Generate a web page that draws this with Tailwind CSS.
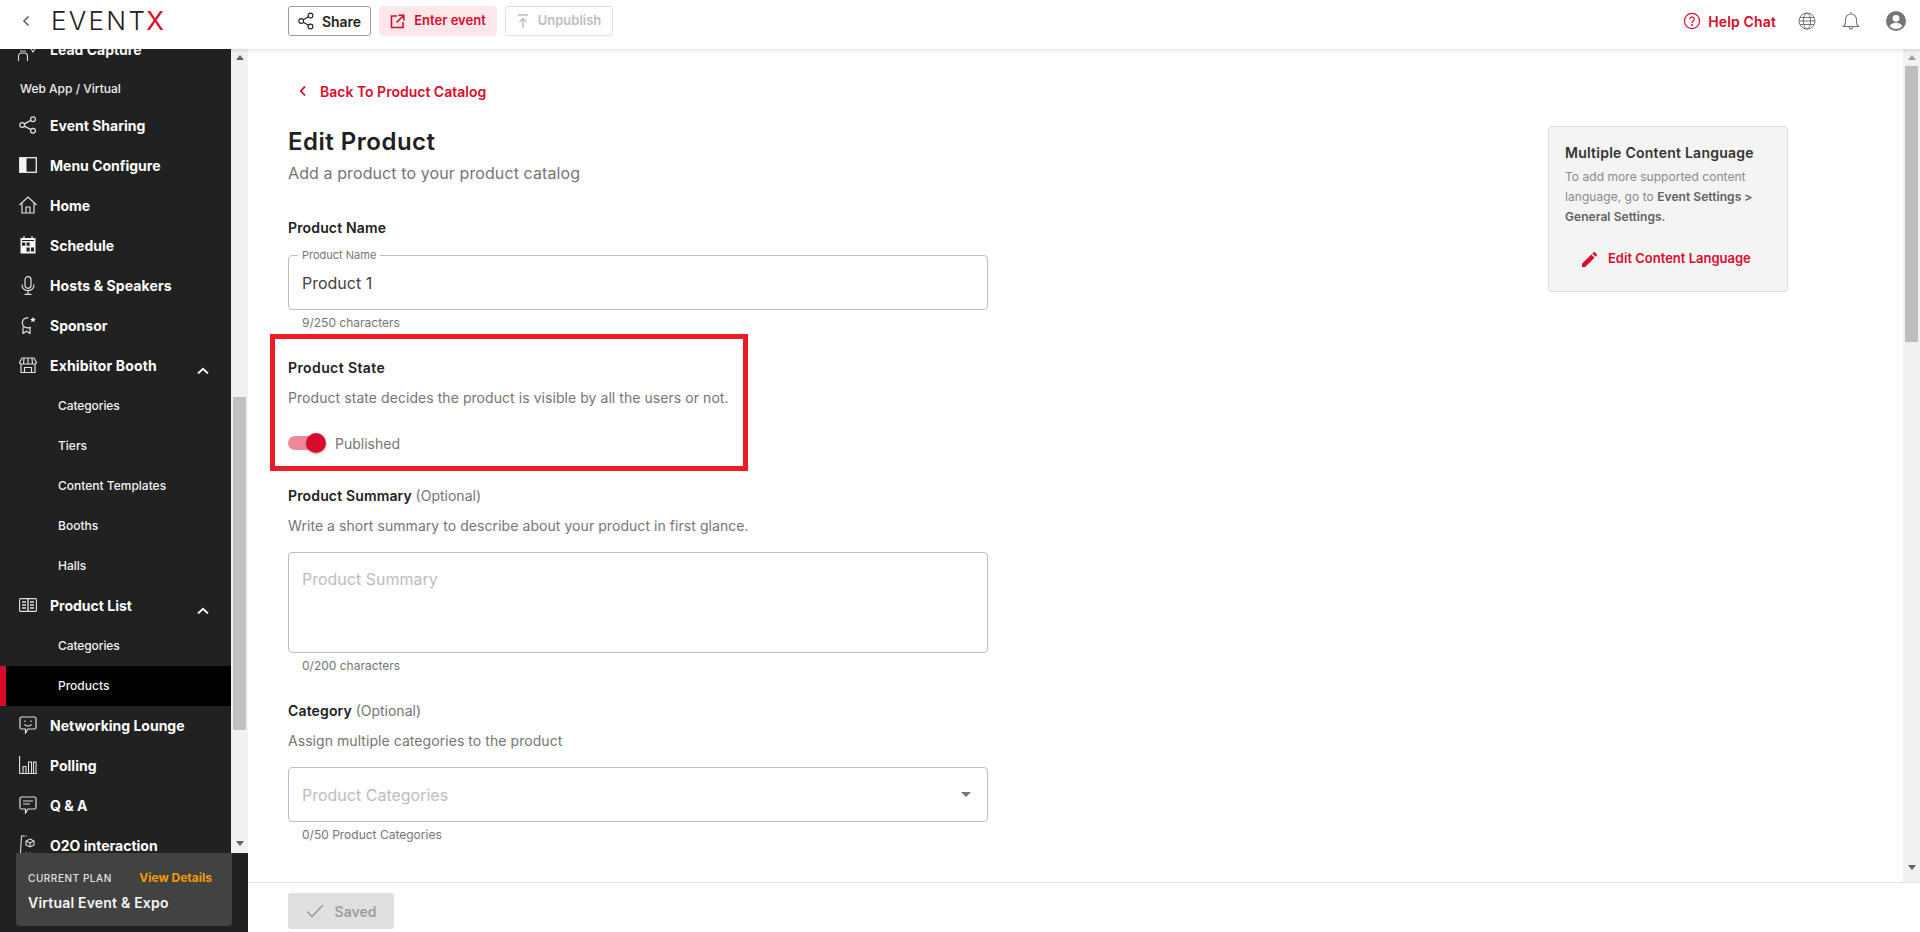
<!DOCTYPE html>
<html lang="en"><head><meta charset="utf-8"><title>Edit Product</title>
<script src="https://cdn.jsdelivr.net/npm/@tailwindcss/browser@4"></script></head>
<body class="bg-white font-['Inter',sans-serif] overflow-hidden">
<div class="w-[1920px] h-[932px] flex flex-col overflow-hidden">
<!-- top bar -->
<header class="relative z-10 h-[49px] shrink-0 bg-white shadow-[0_1px_4px_rgba(0,0,0,0.15)] flex items-center pb-[7px]">
  <svg class="ml-[21px] w-[10px] h-[14px]" viewBox="0 0 10 14" fill="none" stroke="#616161" stroke-width="1.6"><path d="M7.5 2.5 3 7l4.500 4.500"/></svg>
  <div class="ml-[20px] w-[113px] flex items-center text-[26px] leading-none font-light tracking-[2.3px] text-[#212121] whitespace-nowrap">EVENT<span class="text-[#d80b2a] font-normal -ml-[1px]">X</span></div>
  <div class="ml-[124px] flex items-center gap-2">
    <button class="w-[83px] h-[30px] rounded-[3px] border border-[#9e9e9e] flex items-center justify-center gap-[8px] text-[14px] font-semibold text-[#212121]">
      <svg class="w-[16px] h-[18px]" viewBox="0 0 16 18" fill="none" stroke="#212121" stroke-width="1.1"><circle cx="3.2" cy="9" r="2.4"/><circle cx="12.5" cy="3.5" r="2.4"/><circle cx="12.500" cy="14.500" r="2.4"/><path d="m5.3 7.8 5.1-3M5.3 10.200l5.100 3"/></svg>Share</button>
    <button class="w-[118px] h-[30px] rounded-[3px] bg-[#fde7ea] flex items-center justify-center gap-[9px] text-[13px] font-semibold text-[#d80b2a]">
      <svg class="w-[15px] h-[15px]" viewBox="0 0 15 15" fill="none" stroke="#d80b2a" stroke-width="1.6"><path d="M7 2H1.500v11.500H13V8M8.500 1.200h5.300v5.300M13.500 1.500 6.500 8.500"/></svg>Enter event</button>
    <button class="w-[108px] h-[30px] rounded-[3px] border border-[#e0e0e0] flex items-center justify-center gap-[9px] text-[13px] font-semibold text-[#bdbdbd]">
      <svg class="w-[12px] h-[15px]" viewBox="0 0 12 15" fill="none" stroke="#bdbdbd" stroke-width="1.4"><path d="M1 1h10M6 14V5M2.500 8 6 4.500 9.500 8"/></svg>Unpublish</button>
  </div>
  <div class="ml-auto flex items-center">
    <svg class="w-[18px] h-[18px]" viewBox="0 0 18 18" fill="none" stroke="#d80b2a" stroke-width="1.2"><circle cx="9" cy="9" r="7.6"/><path d="M6.800 7.200a2.200 2.200 0 1 1 3.400 1.800c-.8.500-1.200 1-1.200 1.900"/><circle cx="9" cy="13" r=".4"/></svg>
    <span class="ml-[7px] text-[14px] font-semibold tracking-[0.15px] text-[#d80b2a] whitespace-nowrap">Help Chat</span>
    <svg class="ml-[22px] w-[18px] h-[18px]" viewBox="0 0 18 18" fill="none" stroke="#757575" stroke-width="1"><circle cx="9" cy="9" r="8"/><ellipse cx="9" cy="9" rx="3.600" ry="8"/><path d="M1 9h16M2 5.500h14M2 12.500h14"/></svg>
    <svg class="ml-[26px] w-[18px] h-[20px]" viewBox="0 0 18 20" fill="none" stroke="#757575" stroke-width="1.1"><path d="M1.500 15.500c1.300-1.200 2-2.300 2-4.500V8.500a5.500 5.500 0 0 1 11 0V11c0 2.200.7 3.300 2 4.500zM7.300 15.500a1.800 1.800 0 1 0 3.400 0M9 1v2"/></svg>
    <svg class="ml-[26px] mr-[14px] w-[20px] h-[20px]" viewBox="0 0 20 20"><circle cx="10" cy="10" r="10" fill="#757575"/><circle cx="10" cy="7.300" r="3.400" fill="#fff"/><path d="M3.700 15c1.400-2.300 3.800-3.300 6.300-3.300s4.900 1 6.300 3.300c-1.500 1.800-3.800 3-6.300 3s-4.800-1.200-6.300-3z" fill="#fff"/></svg>
  </div>
</header>
<div class="flex-1 min-h-0 flex">
  <!-- sidebar -->
  <aside class="w-[248px] shrink-0 bg-[#212121] flex flex-col">
    <div class="h-[804px] flex overflow-hidden">
      <nav class="w-[231px] -mt-[19px] text-white">
        <a class="h-10 flex items-center pb-[2px] text-[14px] font-bold"><span class="w-[50px] flex justify-center pl-[6px]"><svg class="w-[20px] h-[22px] translate-y-[2px]" viewBox="0 0 20 22" fill="none" stroke="#e0e0e0" stroke-width="1.100"><circle cx="5" cy="6" r="2.500"/><path d="M.5 21v-5a3 3 0 0 1 3-3h3a3 3 0 0 1 3 3v5M2 11h6M12.500 8l2.500 4 4-6"/></svg></span>Lead Capture</a>
        <div class="h-9 flex items-center pt-[2px] pl-[20px] text-[12px] font-medium text-[#eeeeee]">Web App / Virtual</div>
        <a class="h-10 flex items-center pb-[2px] text-[14px] font-bold"><span class="w-[50px] flex justify-center pl-[6px]"><svg class="w-[18px] h-[18px]" viewBox="0 0 18 18" fill="none" stroke="#e0e0e0" stroke-width="1.200"><circle cx="3.200" cy="9" r="2.400"/><circle cx="14" cy="3.300" r="2.400"/><circle cx="14" cy="14.700" r="2.400"/><path d="m5.300 7.900 6.600-3.500M5.300 10.100l6.600 3.500"/></svg></span>Event Sharing</a>
        <a class="h-10 flex items-center pb-[2px] text-[14px] font-bold"><span class="w-[50px] flex justify-center pl-[6px]"><svg class="w-[18px] h-[18px]" viewBox="0 0 18 18"><rect x=".7" y="1.700" width="16.600" height="14.600" fill="none" stroke="#e0e0e0" stroke-width="1.400"/><rect x="1" y="2" width="6.500" height="14" fill="#f5f5f5"/></svg></span>Menu Configure</a>
        <a class="h-10 flex items-center pb-[2px] text-[14px] font-bold"><span class="w-[50px] flex justify-center pl-[6px]"><svg class="w-[18px] h-[18px]" viewBox="0 0 18 18" fill="none" stroke="#e0e0e0" stroke-width="1.200"><path d="M.5 9 9 1l8.500 8M3 7.500V17h12V7.500M7 17v-6h4v6"/></svg></span>Home</a>
        <a class="h-10 flex items-center pb-[2px] text-[14px] font-bold"><span class="w-[50px] flex justify-center pl-[6px]"><svg class="w-[16px] h-[18px]" viewBox="0 0 16 18"><path d="M4 0v3M12 0v3" stroke="#e0e0e0" stroke-width="1.300"/><rect x=".5" y="2" width="15" height="15.500" fill="#f5f5f5"/><g fill="#212121"><rect x="2" y="4" width="12" height="1"/><rect x="2" y="6.500" width="3.200" height="3.200"/><rect x="6.500" y="6.500" width="3.200" height="3.200"/><rect x="6.500" y="11.500" width="3.200" height="4"/><rect x="11" y="11.500" width="3" height="4"/></g></svg></span>Schedule</a>
        <a class="h-10 flex items-center pb-[2px] text-[14px] font-bold tracking-[0.1px]"><span class="w-[50px] flex justify-center pl-[6px]"><svg class="w-[14px] h-[19px]" viewBox="0 0 14 19" fill="none" stroke="#e0e0e0" stroke-width="1.200"><rect x="4" y=".7" width="6" height="11.600" rx="3"/><path d="M1 8.500c0 4 2.700 6 6 6s6-2 6-6M7 14.500v3.500M3.500 18.300h7"/></svg></span>Hosts &amp; Speakers</a>
        <a class="h-10 flex items-center pb-[2px] text-[14px] font-bold"><span class="w-[50px] flex justify-center pl-[6px]"><svg class="w-[18px] h-[18px]" viewBox="0 0 18 18" fill="none" stroke="#e0e0e0" stroke-width="1.200"><path d="M9.500 2a5 5 0 1 0-.5 9.800c1 0 2-.3 2.800-.9M4 11v6.500l3.500-2.200 3.500 2.200V11"/><path d="m14 .8.800 1.900 2 .2-1.500 1.300.5 2-1.800-1.100-1.800 1.100.5-2-1.500-1.300 2-.2z" fill="#f5f5f5" stroke="none"/></svg></span>Sponsor</a>
        <a class="h-10 flex items-center pb-[2px] text-[14px] font-bold tracking-[0.15px] relative"><span class="w-[50px] flex justify-center pl-[6px]"><svg class="w-[18px] h-[16px]" viewBox="0 0 18 16" fill="none" stroke="#e0e0e0" stroke-width="1.200"><path d="M3 1h12l2.400 4.500c0 1-.8 1.500-1.600 1.500H2.200C1.400 7 .6 6.500.6 5.500zM2 7v8.500h14V7M5.500 15.500V10.500h7v5M5 1.500 4.500 7M9 1v6M13 1.500l.5 5.500"/></svg></span>Exhibitor Booth<svg class="absolute left-[197px] top-[21px] w-[12px] h-[8px]" viewBox="0 0 12 8" fill="none" stroke="#f5f5f5" stroke-width="1.800"><path d="M1 6.500 6 1.800l5 4.700"/></svg></a>
        <a class="h-10 flex items-center pl-[58px] text-[12px] font-medium text-[#f5f5f5] tracking-[-0.1px]">Categories</a>
        <a class="h-10 flex items-center pl-[58px] text-[12px] font-medium text-[#f5f5f5]">Tiers</a>
        <a class="h-10 flex items-center pl-[58px] text-[12px] font-medium text-[#f5f5f5]">Content Templates</a>
        <a class="h-10 flex items-center pl-[58px] text-[12px] font-medium text-[#f5f5f5]">Booths</a>
        <a class="h-10 flex items-center pl-[58px] text-[12px] font-medium text-[#f5f5f5]">Halls</a>
        <a class="h-10 flex items-center pb-[2px] text-[14px] font-bold relative"><span class="w-[50px] flex justify-center pl-[6px]"><svg class="w-[18px] h-[14px]" viewBox="0 0 18 14" fill="none" stroke="#e0e0e0" stroke-width="1.100"><rect x=".6" y=".6" width="16.800" height="12.800" rx="1"/><path d="M9 1v12M3 4h4M3 7h4M3 10h4M11 4h4M11 7h4M11 10h4" stroke-width="1.400"/></svg></span>Product List<svg class="absolute left-[197px] top-[21px] w-[12px] h-[8px]" viewBox="0 0 12 8" fill="none" stroke="#f5f5f5" stroke-width="1.800"><path d="M1 6.500 6 1.800l5 4.700"/></svg></a>
        <a class="h-10 flex items-center pl-[58px] text-[12px] font-medium text-[#f5f5f5] tracking-[-0.1px]">Categories</a>
        <a class="h-10 flex items-center pl-[52px] text-[12px] font-medium text-[#f5f5f5] bg-black border-l-[6px] border-[#d80b2a]">Products</a>
        <a class="h-10 flex items-center pb-[2px] text-[14px] font-bold"><span class="w-[50px] flex justify-center pl-[6px]"><svg class="w-[18px] h-[18px]" viewBox="0 0 18 18" fill="none" stroke="#e0e0e0" stroke-width="1.200"><path d="M2.500 1h13A1.500 1.500 0 0 1 17 2.500v9a1.500 1.500 0 0 1-1.500 1.500H9l-2.500 4V13h-4A1.500 1.500 0 0 1 1 11.500v-9A1.500 1.500 0 0 1 2.500 1z"/><path d="M5.500 8.500c2 2 5 2 7 0M6 4.500v1.500M12 4.500v1.500"/></svg></span>Networking Lounge</a>
        <a class="h-10 flex items-center pb-[2px] text-[14px] font-bold"><span class="w-[50px] flex justify-center pl-[6px]"><svg class="w-[18px] h-[18px]" viewBox="0 0 18 18" fill="none" stroke="#e0e0e0" stroke-width="1.100"><path d="M.6 0v17.500H18M4 17v-6.500h3V17M9.500 17V6h3v11M14.500 17V6h2.500v11"/></svg></span>Polling</a>
        <a class="h-10 flex items-center pb-[2px] text-[14px] font-bold"><span class="w-[50px] flex justify-center pl-[6px]"><svg class="w-[18px] h-[18px]" viewBox="0 0 18 18" fill="none" stroke="#e0e0e0" stroke-width="1.200"><path d="M2.500 1h13A1.500 1.500 0 0 1 17 2.500v9a1.500 1.500 0 0 1-1.500 1.500H9l-2.500 4V13h-4A1.500 1.500 0 0 1 1 11.500v-9A1.500 1.500 0 0 1 2.500 1z"/><path d="M4 5h10M4 8h7"/></svg></span>Q &amp; A</a>
        <a class="h-10 flex items-center pb-[2px] text-[14px] font-bold"><span class="w-[50px] flex justify-center pl-[6px]"><svg class="w-[18px] h-[20px]" viewBox="0 0 18 20" fill="none" stroke="#e0e0e0" stroke-width="1.100"><path d="M6 1H2.500L1.500 18M7 1h1"/><path d="m11 4 4 2v4l-4 2-4-2V6zM7 6l4 2 4-2M11 8v4"/><path d="M7 18h1M11 18h1"/></svg></span>O2O interaction</a>
      </nav>
      <div class="w-[17px] h-full bg-[#f1f1f1] flex flex-col items-center">
        <svg class="mt-[6px] w-[8px] h-[5px]" viewBox="0 0 8 5"><path d="M4 0 8 5H0z" fill="#616161"/></svg>
        <div class="mt-[337px] w-[13px] h-[333px] bg-[#c1c1c1]"></div>
        <svg class="mt-[111px] w-[8px] h-[5px]" viewBox="0 0 8 5"><path d="M4 5 8 0H0z" fill="#616161"/></svg>
      </div>
    </div>
    <div class="flex-1 pl-4">
      <div class="w-[216px] h-[73px] bg-[#424242] rounded-b-[4px] pl-3 pr-5 pt-[17px]">
        <div class="flex justify-between items-center h-4 text-[10px] font-medium tracking-[0.55px] text-[#e0e0e0]">CURRENT PLAN<span class="text-[12px] font-bold tracking-normal text-[#f59c00]">View Details</span></div>
        <div class="mt-[7px] text-[14px] font-semibold tracking-[0.2px] text-[#f5f5f5] leading-5 whitespace-nowrap">Virtual Event &amp; Expo</div>
      </div>
    </div>
  </aside>
  <!-- main -->
  <main class="flex-1 min-w-0 flex flex-col">
    <div class="h-[833px] flex overflow-hidden">
      <div class="flex-1 flex pl-[40px]">
        <div class="w-[700px] shrink-0">
          <a class="mt-[32px] h-5 flex items-center text-[14px] font-semibold text-[#d80b2a]"><svg class="ml-[11px] mr-[13px] w-[8px] h-[12px]" viewBox="0 0 8 12" fill="none" stroke="#d80b2a" stroke-width="1.800"><path d="M6 1.500 1.800 6 6 10.500"/></svg>Back To Product Catalog</a>
          <h1 class="mt-[25px] h-8 text-[24px] leading-8 font-semibold tracking-[0.5px] text-[#212121]">Edit Product</h1>
          <p class="mt-[3px] h-6 text-[16px] leading-6 tracking-[0.1px] text-[#757575]">Add a product to your product catalog</p>
          <div class="mt-[33px] h-5 text-[14px] leading-5 font-semibold tracking-[0.15px] text-[#212121]">Product Name</div>
          <div class="relative mt-[17px] h-[55px] rounded-[4px] border border-[#bdbdbd] px-[13px] flex items-center text-[16px] text-[#424242]">Product 1
            <span class="absolute left-[9px] -top-[7px] px-[4px] bg-white text-[11px] leading-[13px] text-[#757575]">Product Name</span></div>
          <div class="mt-[5px] h-4 pl-[14px] text-[12px] leading-4 text-[#757575]">9/250 characters</div>
          <section class="-ml-[18px] mt-[3px] w-[478px] h-[137px] border-[5px] border-[#ed1c24] pl-[13px] pt-[19px]">
            <div class="h-5 text-[14px] leading-5 font-semibold tracking-[0.4px] text-[#212121]">Product State</div>
            <p class="mt-[10px] h-5 text-[14px] leading-5 tracking-[0.06px] text-[#757575] whitespace-nowrap">Product state decides the product is visible by all the users or not.</p>
            <div class="mt-[23px] h-6 flex items-center">
              <span class="relative w-[34px] h-[14px] rounded-full bg-[#ee8a97]"><span class="absolute -right-[4px] -top-[3px] w-[20px] h-[20px] rounded-full bg-[#d80b2a] shadow-[0_1px_3px_rgba(0,0,0,0.3)]"></span></span>
              <span class="ml-[13px] text-[14px] text-[#757575]">Published</span>
            </div>
          </section>
          <div class="mt-[15px] h-5 text-[14px] leading-5 font-semibold tracking-[0.15px] text-[#212121]">Product Summary <span class="font-normal tracking-normal text-[#757575]">(Optional)</span></div>
          <p class="mt-[10px] h-5 text-[14px] leading-5 tracking-[0.06px] text-[#757575]">Write a short summary to describe about your product in first glance.</p>
          <div class="mt-[16px] h-[101px] rounded-[4px] border border-[#bdbdbd] px-[13px] pt-[14px] text-[16px] leading-6 text-[#bdbdbd]">Product Summary</div>
          <div class="mt-[5px] h-4 pl-[14px] text-[12px] leading-4 text-[#757575]">0/200 characters</div>
          <div class="mt-[27px] h-5 text-[14px] leading-5 font-semibold tracking-[0.15px] text-[#212121]">Category <span class="font-normal tracking-normal text-[#757575]">(Optional)</span></div>
          <p class="mt-[10px] h-5 text-[14px] leading-5 tracking-[0.06px] text-[#757575]">Assign multiple categories to the product</p>
          <div class="mt-[16px] h-[55px] rounded-[4px] border border-[#bdbdbd] pl-[13px] pr-[2px] flex items-center justify-between text-[16px] text-[#bdbdbd]">Product Categories<svg class="mr-[14px] w-[10px] h-[5px]" viewBox="0 0 10 5"><path d="M0 0h10L5 5z" fill="#757575"/></svg></div>
          <div class="mt-[5px] h-4 pl-[14px] text-[12px] leading-4 text-[#757575]">0/50 Product Categories</div>
        </div>
        <aside class="ml-[560px] mt-[77px] w-[240px] h-[166px] shrink-0 rounded-[4px] border border-[#dddddd] bg-[#f4f4f4] pl-[16px] pt-[16px]">
          <h2 class="h-5 text-[14px] leading-5 font-semibold tracking-[0.25px] text-[#333333] whitespace-nowrap">Multiple Content Language</h2>
          <p class="mt-[4px] w-[205px] text-[12px] leading-5 tracking-[0.05px] text-[#8a8a8a]">To add more supported content language, go to <b class="font-semibold text-[#616161]">Event Settings &gt; General Settings.</b></p>
          <a class="mt-[22px] pl-[17px] h-5 flex items-center text-[13px] font-semibold text-[#d80b2a] whitespace-nowrap"><svg class="mr-[11px] w-[15px] h-[15px]" viewBox="0 0 15 15" fill="#d80b2a"><path d="M0 15v-3.200L9.300 2.500l3.200 3.200L3.200 15zM10.300 1.500 11.600.2a.8.8 0 0 1 1.100 0l2.100 2.100a.8.8 0 0 1 0 1.100l-1.300 1.300z"/></svg>Edit Content Language</a>
        </aside>
      </div>
      <div class="w-[17px] shrink-0 bg-[#f1f1f1] flex flex-col items-center">
        <svg class="mt-[6px] w-[8px] h-[5px]" viewBox="0 0 8 5"><path d="M4 0 8 5H0z" fill="#9e9e9e"/></svg>
        <div class="mt-[6px] w-[13px] h-[276px] bg-[#bdbdbd]"></div>
        <svg class="mt-[523px] w-[8px] h-[5px]" viewBox="0 0 8 5"><path d="M4 5 8 0H0z" fill="#616161"/></svg>
      </div>
    </div>
    <footer class="flex-1 border-t border-[#e5e5e5] pl-[40px] pt-[10px]">
      <button class="w-[106px] h-[36px] rounded-[3px] bg-[#e0e0e0] flex items-center justify-center gap-[11px] text-[14px] font-semibold text-[#9e9e9e]"><svg class="w-[18px] h-[14px]" viewBox="0 0 18 14" fill="none" stroke="#9e9e9e" stroke-width="1.600"><path d="m1 7.500 5 5L17 1"/></svg>Saved</button>
    </footer>
  </main>
</div>
</div>
</body></html>
